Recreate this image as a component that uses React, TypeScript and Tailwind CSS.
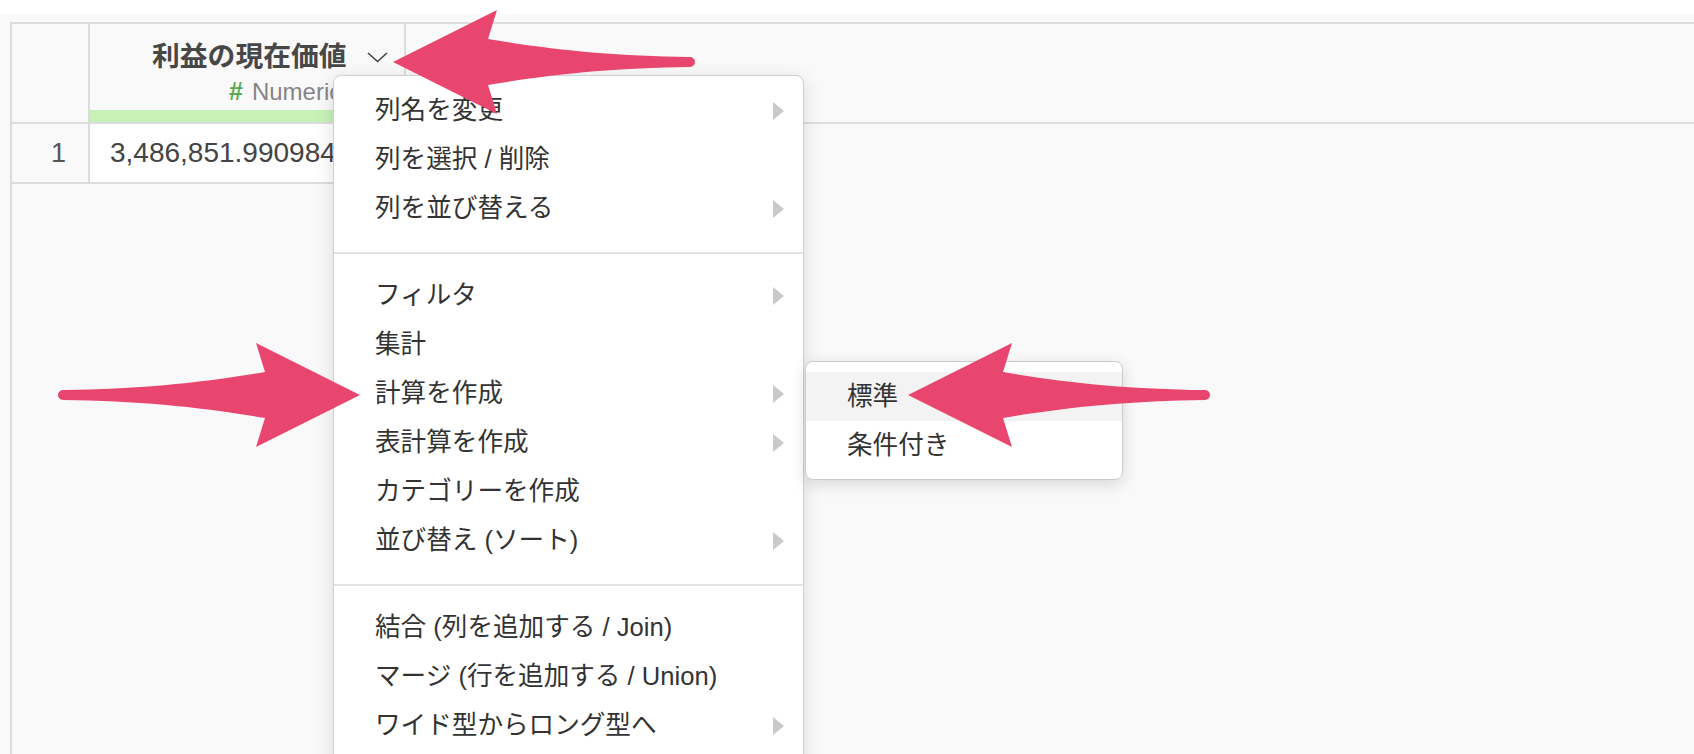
import React from "react";

const menuGroups: { label: string; sub?: boolean }[][] = [
  [
    { label: "列名を変更", sub: true },
    { label: "列を選択 / 削除" },
    { label: "列を並び替える", sub: true },
  ],
  [
    { label: "フィルタ", sub: true },
    { label: "集計" },
    { label: "計算を作成", sub: true },
    { label: "表計算を作成", sub: true },
    { label: "カテゴリーを作成" },
    { label: "並び替え (ソート)", sub: true },
  ],
  [
    { label: "結合 (列を追加する / Join)" },
    { label: "マージ (行を追加する / Union)" },
    { label: "ワイド型からロング型へ", sub: true },
  ],
];

// left-pointing arrow, tip at (x, y)
function arrowLeft(x: number, y: number) {
  return `M${x} ${y} L${x + 104} ${y - 52} L${x + 95} ${y - 23} C${x + 160} ${y - 12} ${x + 220} ${y - 6} ${x + 297} ${y - 5} A5 5 0 0 1 ${x + 297} ${y + 5} C${x + 220} ${y + 6} ${x + 160} ${y + 12} ${x + 95} ${y + 23} L${x + 104} ${y + 52} Z`;
}

function arrowRight(x: number, y: number) {
  return `M${x} ${y} L${x - 104} ${y - 52} L${x - 95} ${y - 23} C${x - 160} ${y - 12} ${x - 220} ${y - 6} ${x - 297} ${y - 5} A5 5 0 0 0 ${x - 297} ${y + 5} C${x - 220} ${y + 6} ${x - 160} ${y + 12} ${x - 95} ${y + 23} L${x - 104} ${y + 52} Z`;
}

function Caret() {
  return (
    <svg width="11" height="18" viewBox="0 0 11 18">
      <path d="M0 0 L11 9 L0 18 Z" fill="#c9c9c9" />
    </svg>
  );
}

export default function App() {
  return (
    <div className="relative h-[754px] w-[1694px] overflow-hidden bg-white font-['Liberation_Sans','Noto_Sans_CJK_JP',sans-serif]">
      <div className="h-[14px]" />
      <div className="h-[740px] bg-[#f9f9f9] pl-[10px] pt-[8px]">
        <div className="h-full border-l-2 border-[#dcdcdc]">
          {/* header row */}
          <div className="flex h-[102px] border-y-2 border-[#dcdcdc]">
            <div className="w-[78px] border-r-2 border-[#dcdcdc]" />
            <div className="flex w-[316px] flex-col border-r-2 border-[#dcdcdc]">
              <div className="flex items-center pl-[62px] pt-[15px]">
                <span className="text-[27.8px] font-bold leading-[36px] text-[#474747]">
                  利益の現在価値
                </span>
                <svg className="ml-[20px] mt-[1px]" width="21" height="11" viewBox="0 0 21 11">
                  <polyline points="1,1 10.5,9.5 20,1" fill="none" stroke="#444" strokeWidth="1.6" />
                </svg>
              </div>
              <div className="mt-[2px] whitespace-nowrap pl-[139px] text-[24px] leading-[28px]">
                <span className="text-[25px] font-bold text-[#5bab4e]">#</span>
                <span className="ml-[9px] text-[#858585]">Numeric</span>
              </div>
              <div className="mt-auto h-[12px] bg-[#c6f2b8]" />
            </div>
            <div className="flex-1" />
          </div>
          {/* data row */}
          <div className="flex h-[60px] w-[394px] border-b-2 border-[#dcdcdc]">
            <div className="flex w-[78px] items-center justify-end border-r-2 border-[#dcdcdc] pr-[22px] text-[27px] text-[#555]">
              1
            </div>
            <div className="flex flex-1 items-center bg-white pl-[20px] text-[28px] text-[#444]">
              3,486,851.990984
            </div>
          </div>
        </div>
      </div>

      {/* context menu */}
      <div className="absolute left-[333px] top-[75px] h-[700px] w-[471px] rounded-t-[8px] border border-[#d0d0d0] bg-white pt-[10px] text-[25.6px] text-[#333] shadow-[0_4px_18px_rgba(0,0,0,0.13)]">
        {menuGroups.map((group, gi) => (
          <div key={gi}>
            {gi > 0 && <div className="mb-[17px] mt-[19px] h-[2px] bg-[#e3e3e3]" />}
            {group.map((item) => (
              <div
                key={item.label}
                className="flex h-[49px] items-center justify-between whitespace-nowrap pl-[41px] pr-[19px]"
              >
                <span>{item.label}</span>
                {item.sub && <Caret />}
              </div>
            ))}
          </div>
        ))}
      </div>

      {/* submenu */}
      <div className="absolute left-[805px] top-[361px] h-[119px] w-[318px] rounded-[8px] border border-[#cdcdcd] bg-white pt-[10px] text-[25.6px] text-[#333] shadow-[0_4px_16px_rgba(0,0,0,0.14)]">
        <div className="flex h-[49px] items-center bg-[#f3f3f3] pl-[41px]">標準</div>
        <div className="flex h-[49px] items-center pl-[41px]">条件付き</div>
      </div>

      {/* annotation arrows */}
      <svg className="pointer-events-none absolute inset-0" width="1694" height="754">
        <path d={arrowLeft(393, 62)} fill="#e8466f" />
        <path d={arrowRight(360, 395)} fill="#e8466f" />
        <path d={arrowLeft(908, 395)} fill="#e8466f" />
      </svg>
    </div>
  );
}
